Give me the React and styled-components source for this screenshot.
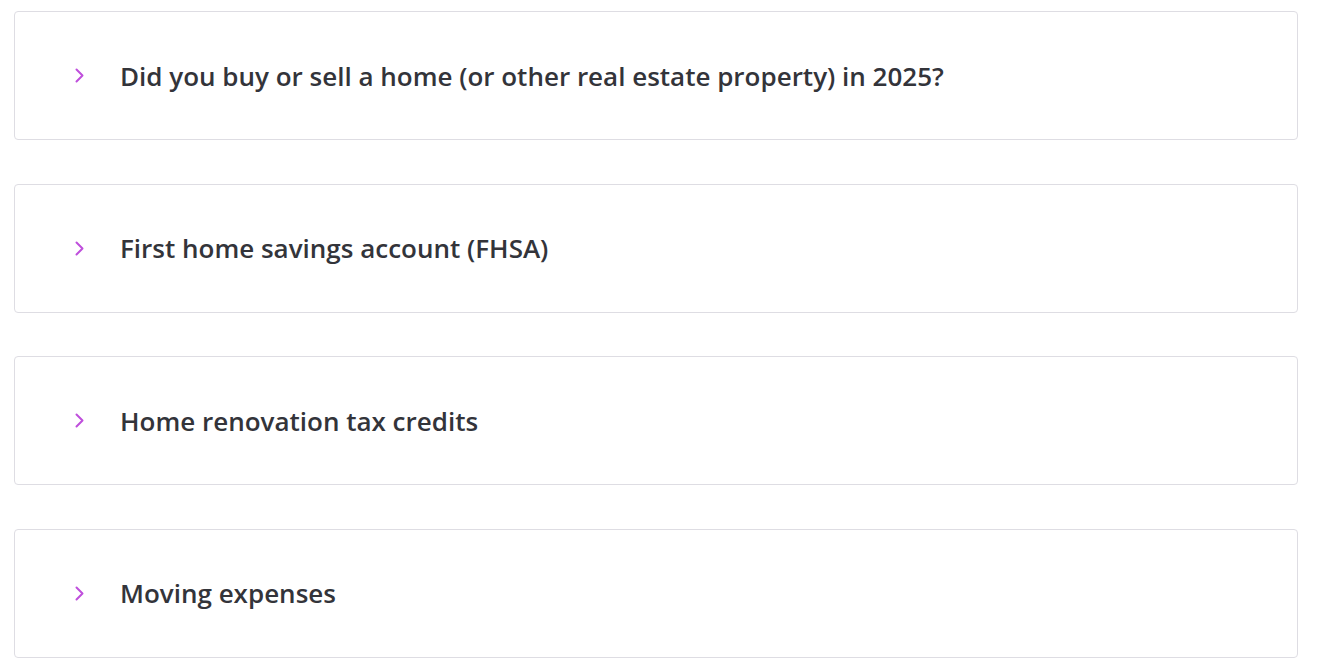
import React from "react";
import styled, { createGlobalStyle } from "styled-components";

const GlobalStyle = createGlobalStyle`
    body {
        margin: 0;
        background: #ffffff;
        font-family: "Open Sans", "Noto Sans", sans-serif;
    }
`;

const Page = styled.div`
    display: flex;
    flex-direction: column;
    gap: 43.67px;
    padding: 11px 22px 0 14px;
`;

const Card = styled.div`
    height: 129px;
    box-sizing: border-box;
    border: 1px solid #dedde3;
    border-radius: 4px;
    background: #ffffff;
    display: flex;
    align-items: center;
    padding-left: 57px;
`;

const Chevron = styled.span`
    width: 14px;
    height: 16px;
    display: flex;
    align-items: center;
    justify-content: center;
    margin-right: 34px;
    color: #bf4fdc;
`;

const Title = styled.span`
    font-size: 26px;
    font-weight: 600;
    color: #33343a;
    letter-spacing: 0;
`;

const items = [
    "Did you buy or sell a home (or other real estate property) in 2025?",
    "First home savings account (FHSA)",
    "Home renovation tax credits",
    "Moving expenses",
];

const App = () => {
    return (
        <>
            <GlobalStyle />
            <Page>
                {items.map((item) => (
                    <Card key={item}>
                        <Chevron>
                            <svg width="11" height="15" viewBox="0 0 11 15" fill="none">
                                <path d="M2.5 1.5 L8.5 7.5 L2.5 13.5" stroke="currentColor" strokeWidth="2" strokeLinecap="round" strokeLinejoin="round" />
                            </svg>
                        </Chevron>
                        <Title>{item}</Title>
                    </Card>
                ))}
            </Page>
        </>
    );
};

export default App;
